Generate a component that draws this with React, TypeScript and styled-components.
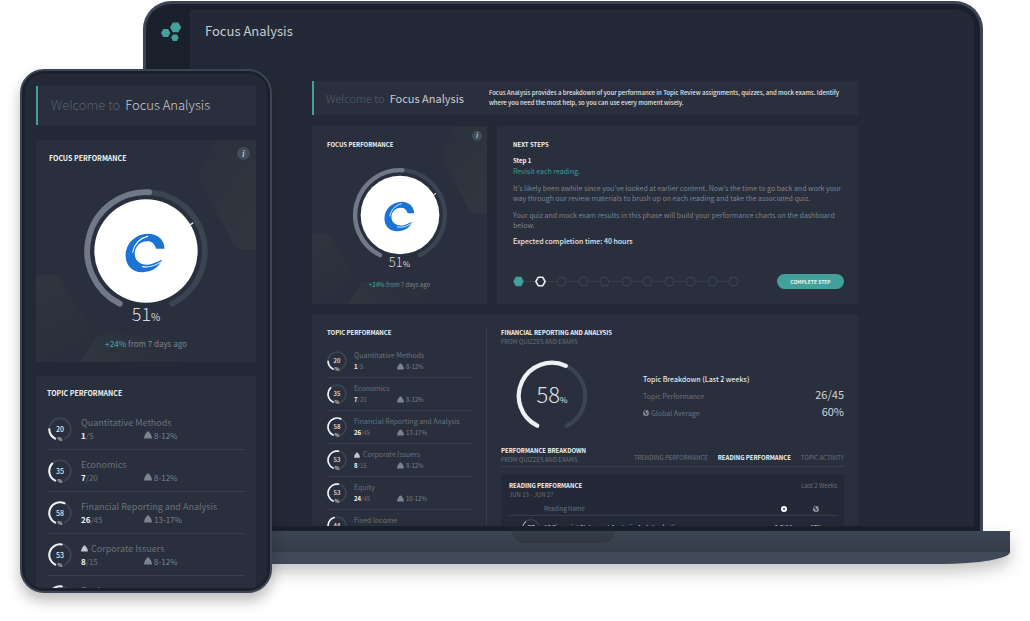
import React from "react";
import styled, { createGlobalStyle, css } from "styled-components";
import { FaEarthAmericas } from "react-icons/fa6";

const color = {
  screen: "#232936",
  bezel: "#1b212c",
  frame: "#3b4553",
  card: "#292f3c",
  line: "#383f4c",
  track: "#3b4451",
  teal: "#43a19b",
  tealText: "#3f9d96",
  white: "#f2f4f6",
  light: "#c9ccd1",
  muted: "#69727e",
  grey: "#7c848f",
};

const GlobalStyle = createGlobalStyle`
  * { box-sizing: border-box; }
  body {
    margin: 0;
    background: #fff;
    font-family: "Noto Sans CJK KR", "Noto Sans", sans-serif;
    color: ${color.light};
  }
  h1, h2, h3, p, ul, ol { margin: 0; padding: 0; font-size: inherit; font-weight: inherit; }
  ul, ol { list-style: none; }
  button { border: 0; padding: 0; background: none; font: inherit; color: inherit; cursor: pointer; }
  svg { display: block; }
`;

/* ---------- device frames ---------- */

const Stage = styled.main`
  position: relative;
  padding: 1px 20px 56px 116px;
`;

const Laptop = styled.section`
  display: flex;
  flex-direction: column;
`;

const Lid = styled.div`
  margin: 0 27px;
  height: 530px;
  padding: 6px 6px 5px;
  border: 3px solid ${color.frame};
  border-bottom: 0;
  border-radius: 28px 28px 0 0;
  background: ${color.bezel};
`;

const LaptopScreen = styled.div`
  display: flex;
  height: 100%;
  overflow: hidden;
  border-radius: 16px 16px 0 0;
  background: ${color.screen};
`;

const Base = styled.div`
  display: flex;
  flex-direction: column;
  filter: drop-shadow(0 8px 8px rgba(20, 20, 20, 0.25));
`;

const BaseTop = styled.div`
  display: flex;
  justify-content: center;
  height: 21px;
  background: linear-gradient(#3c4653, #343c48);
`;

const Notch = styled.div`
  width: 103px;
  height: 12px;
  border-radius: 0 0 12px 12px;
  background: linear-gradient(#363e4a, #303743);
`;

const BaseBottom = styled.div`
  height: 12px;
  border-radius: 0 0 70px 70px / 0 0 12px 12px;
  background: #3f4958;
`;

const Phone = styled.section`
  position: absolute;
  left: 20px;
  top: 69px;
  width: 252px;
  height: 524px;
  padding: 3px;
  border: 2px solid ${color.frame};
  border-radius: 24px;
  background: ${color.bezel};
  box-shadow: 0 8px 14px rgba(20, 20, 20, 0.28);
`;

const PhoneScreen = styled.div`
  display: flex;
  flex-direction: column;
  height: 100%;
  padding: 12px 11px 0;
  overflow: hidden;
  border-radius: 18px;
  background: ${color.screen};
`;

/* ---------- laptop page ---------- */

const Sidebar = styled.nav`
  flex: 0 0 38px;
  padding: 12px 0 0 8px;
  background: ${color.bezel};
`;

const HomeLink = styled.a`
  display: block;
  width: 22px;
`;

const Page = styled.div`
  flex: 1;
  min-width: 0;
`;

const PageHeader = styled.header`
  height: 44px;
  padding-left: 15px;
  line-height: 42px;
  font-size: 13px;
`;

const Content = styled.div`
  display: flex;
  flex-direction: column;
  gap: 11px;
  padding: 27px 116px 0 122px;
`;

const CardRow = styled.div`
  display: grid;
  grid-template-columns: 175px 1fr;
  gap: 10px;
  height: 178px;
`;

type Sized = { $large?: boolean };

const Banner = styled.header<Sized>`
  display: flex;
  align-items: center;
  flex-shrink: 0;
  height: ${(p) => (p.$large ? 39 : 34)}px;
  padding-left: ${(p) => (p.$large ? 13 : 12)}px;
  padding-right: 16px;
  border-left: 2px solid ${color.teal};
  background: ${color.card};
`;

const Welcome = styled.h1<Sized>`
  display: flex;
  gap: 5px;
  white-space: nowrap;
  font-size: ${(p) => (p.$large ? 13 : 11)}px;
  font-weight: ${(p) => (p.$large ? 300 : 400)};
  line-height: 16px;
  padding-bottom: 1px;
`;

const WelcomeLead = styled.span`
  color: #56606c;
  font-weight: 300;
`;

const BannerText = styled.p`
  margin-left: 25px;
  font-size: 6px;
  line-height: 10px;
  font-weight: 500;
  color: #e3e5e8;
`;

const Card = styled.section`
  position: relative;
  background: ${color.card};
`;

const CardTitle = styled.h2<Sized>`
  font-size: ${(p) => (p.$large ? 7 : 6)}px;
  line-height: ${(p) => (p.$large ? 12 : 10)}px;
  font-weight: 700;
  text-transform: uppercase;
  color: ${color.white};
`;

const Subtitle = styled.p`
  font-size: 6px;
  line-height: 8px;
  text-transform: uppercase;
  color: ${color.muted};
`;

/* ---------- focus performance ---------- */

const FocusCard = styled(Card)<Sized>`
  display: flex;
  flex-direction: column;
  flex-shrink: 0;
  overflow: hidden;
  ${(p) =>
    p.$large
      ? css`
          height: 222px;
          padding: 12px 13px;
          margin-top: 15px;
        `
      : css`
          padding: 14px 15px;
        `}
`;

const Pattern = styled.svg`
  position: absolute;
  inset: 0;
  width: 100%;
  height: 100%;
`;

const Layer = styled.div`
  position: relative;
`;

const InfoButton = styled.button<Sized>`
  position: absolute;
  top: ${(p) => (p.$large ? 7 : 5)}px;
  right: ${(p) => (p.$large ? 6 : 5)}px;
  width: ${(p) => (p.$large ? 13 : 10)}px;
  height: ${(p) => (p.$large ? 13 : 10)}px;
  border-radius: 50%;
  background: #434c59;
  color: #b4b9c0;
  font: italic 700 ${(p) => (p.$large ? 10 : 8)}px/1 "Liberation Serif", serif;
  text-align: center;
`;

const GaugeBox = styled(Layer)<Sized>`
  align-self: center;
  width: ${(p) => (p.$large ? 126 : 96)}px;
  margin-top: ${(p) => (p.$large ? 24 : 17)}px;
`;

const FocusValue = styled(Layer)<Sized>`
  margin-top: ${(p) => (p.$large ? -11 : -9)}px;
  text-align: center;
  font-weight: 300;
  font-size: ${(p) => (p.$large ? 18 : 13)}px;
  line-height: ${(p) => (p.$large ? 20 : 16)}px;
  color: #d9dcdf;
`;

const Unit = styled.small<{ $size: number }>`
  font-size: ${(p) => p.$size}px;
  font-weight: 400;
`;

const Delta = styled(Layer)<Sized>`
  margin-top: ${(p) => (p.$large ? 11 : 8)}px;
  text-align: center;
  font-size: ${(p) => (p.$large ? 8 : 6)}px;
  line-height: ${(p) => (p.$large ? 12 : 9)}px;
  color: ${color.grey};
`;

const Gain = styled.span`
  color: ${color.tealText};
  font-weight: 500;
`;

/* ---------- next steps ---------- */

const StepsCard = styled(Card)`
  display: flex;
  flex-direction: column;
  padding: 14px 14px 15px 16px;
  font-size: 7px;
  line-height: 10px;
`;

const StepName = styled.h3`
  margin-top: 6px;
  font-size: 6px;
  font-weight: 700;
  color: ${color.white};
`;

const StepLink = styled.a`
  color: ${color.tealText};
  text-decoration: none;
`;

const StepText = styled.p`
  margin-top: 7px;
  color: ${color.grey};
`;

const StepTime = styled.p`
  margin-top: 6px;
  font-weight: 500;
  color: #e3e5e8;
`;

const StepFooter = styled.div`
  display: flex;
  align-items: center;
  justify-content: space-between;
  margin-top: auto;
`;

const StepTrack = styled.ol`
  display: flex;
  width: 226px;
`;

const StepItem = styled.li`
  display: flex;
  align-items: center;
  &:not(:first-child) { flex: 1; }
  &:not(:first-child)::before {
    content: "";
    flex: 1;
    height: 1px;
    background: ${color.line};
  }
`;

const CompleteButton = styled.button`
  width: 67px;
  height: 15px;
  border-radius: 8px;
  background: ${color.teal};
  color: #eaf6f5;
  font-size: 5px;
  font-weight: 700;
  line-height: 15px;
`;

/* ---------- topics ---------- */

const TopicCard = styled(Card)`
  display: flex;
  padding-top: 13px;
  min-height: 260px;
`;

const PhoneTopicCard = styled(Card)`
  flex: 1;
  margin-top: 14px;
  padding: 11px 11px 0;
`;

const TopicColumn = styled.div`
  flex: 0 0 175px;
  padding: 0 14px 0 15px;
  border-right: 1px solid ${color.line};
`;

const TopicList = styled.ul<Sized>`
  margin-top: ${(p) => (p.$large ? 9 : 7)}px;
`;

const TopicItem = styled.li<Sized>`
  display: flex;
  align-items: center;
  gap: ${(p) => (p.$large ? 9 : 7)}px;
  height: ${(p) => (p.$large ? 42 : 33)}px;
  padding-left: ${(p) => (p.$large ? 1 : 0)}px;
  border-bottom: 1px solid ${color.line};
`;

const RingBox = styled.div<{ $size: number }>`
  display: grid;
  flex: 0 0 auto;
  width: ${(p) => p.$size}px;
  height: ${(p) => p.$size}px;
  place-items: center;
  > * { grid-area: 1 / 1; }
`;

const RingNumber = styled.span<Sized>`
  font-size: ${(p) => (p.$large ? 7 : 6)}px;
  line-height: 10px;
  font-weight: 500;
  color: #e6e8eb;
`;

const RingUnit = styled.span`
  align-self: end;
  font-size: 5px;
  line-height: 5px;
  font-weight: 700;
  color: ${color.light};
`;

const TopicBody = styled.div<Sized>`
  flex: 1;
  font-size: ${(p) => (p.$large ? 9 : 7)}px;
  line-height: ${(p) => (p.$large ? 13 : 11)}px;
  color: ${color.muted};
  white-space: nowrap;
`;

const TopicName = styled.h3`
  display: flex;
  align-items: center;
  gap: 3px;
`;

const TopicMeta = styled.div<Sized>`
  display: grid;
  grid-template-columns: ${(p) => (p.$large ? 63 : 43)}px 1fr;
  font-size: ${(p) => (p.$large ? 8 : 6)}px;
  color: ${color.grey};
`;

const Score = styled.span`
  color: ${color.muted};
  b { color: ${color.white}; font-weight: 700; }
`;

const Weight = styled.span`
  display: flex;
  align-items: center;
  gap: 2px;
`;

/* ---------- topic detail ---------- */

const Detail = styled.div`
  flex: 1;
  padding: 0 14px;
`;

const DetailRow = styled.div`
  display: flex;
  align-items: center;
  justify-content: space-between;
  margin-top: 14px;
  padding-left: 15px;
`;

const DetailNumber = styled.p`
  font-size: 22px;
  line-height: 30px;
  font-weight: 300;
  color: #dfe2e5;
`;

const Stats = styled.div`
  width: 201px;
  line-height: 17px;
  font-size: 7px;
`;

const StatsTitle = styled.h3`
  font-weight: 500;
  color: #e3e5e8;
`;

const StatLine = styled.div`
  display: flex;
  align-items: center;
  justify-content: space-between;
  height: 17px;
`;

const StatLabel = styled.span`
  display: flex;
  align-items: center;
  gap: 2px;
  color: ${color.muted};
`;

const StatValue = styled.span`
  padding-bottom: 3px;
  font-size: 11px;
  color: #d3d6da;
`;

const BreakdownHead = styled.div`
  display: flex;
  align-items: flex-end;
  justify-content: space-between;
  height: 21px;
  margin-top: 14px;
  border-bottom: 1px solid ${color.line};
`;

const HeadText = styled.div`
  padding-bottom: 2px;
`;

const Tabs = styled.div`
  display: flex;
  gap: 10px;
  padding-bottom: 3px;
`;

const Tab = styled.button<{ $active?: boolean }>`
  font-size: 6px;
  line-height: 10px;
  text-transform: uppercase;
  font-weight: ${(p) => (p.$active ? 700 : 400)};
  color: ${(p) => (p.$active ? color.white : color.muted)};
`;

const ReadingPanel = styled.div`
  margin-top: 7px;
  padding: 7px 7px 0 8px;
  background: ${color.screen};
`;

const ReadingHead = styled.div`
  display: flex;
  justify-content: space-between;
  font-size: 6px;
  line-height: 10px;
  color: ${color.muted};
`;

const ReadingTable = styled.table`
  width: 100%;
  margin-top: 5px;
  table-layout: fixed;
  border-collapse: collapse;
  font-size: 6px;
  line-height: 10px;
  th { height: 11px; padding: 0; font-weight: 400; text-align: left; color: ${color.muted}; border-bottom: 1px solid ${color.line}; }
  td { height: 26px; padding: 0; color: ${color.light}; font-weight: 500; white-space: nowrap; }
`;

const ColRing = styled.col`width: 35px;`;
const ColValue = styled.col`width: 33px;`;
const ColLast = styled.col`width: 37px;`;

const Centered = styled.div`
  display: flex;
  justify-content: center;
`;

const RingCell = styled(Centered)`
  padding-left: 9px;
`;

const LastCell = styled(Centered)`
  padding-right: 5px;
`;

/* ---------- drawings ---------- */

const GAP = 26.5;

function arc(r: number, from: number, to: number) {
  const at = (deg: number) => {
    const a = ((deg - 90) * Math.PI) / 180;
    return `${(50 + r * Math.cos(a)).toFixed(2)} ${(50 + r * Math.sin(a)).toFixed(2)}`;
  };
  return `M${at(from)} A${r} ${r} 0 ${to - from > 180 ? 1 : 0} 1 ${at(to)}`;
}

function Ring(props: { value: number; size: number; stroke: number; bar?: string; logo?: boolean }) {
  const { value, size, stroke, bar = "#eef1f4", logo } = props;
  const r = 49 - stroke / 2;
  const start = -180 + GAP;
  const end = 180 - GAP;
  const now = start + ((end - start) * value) / 100;
  return (
    <svg width={size} height={size} viewBox="0 0 100 100" fill="none" strokeLinecap="round" aria-hidden="true">
      <path d={arc(r, start, end)} stroke={color.track} strokeWidth={stroke} />
      <path d={arc(r, start, now)} stroke={bar} strokeWidth={stroke} />
      {logo && (
        <>
          <circle cx="50" cy="50" r="41" fill="#fff" />
          <path d="M85 29.2 L87 27.8" stroke="#dfe2e5" strokeWidth="1.2" />
          <g transform="translate(33.5 36) scale(0.79)">
            <path
              d="M39.5 15.5C39.5 7 33 .4 23 .4 10 .6.4 10.5.4 22.2.4 32.5 7.5 39.4 17.5 39 27 38.6 33.5 34.5 37.2 26.8 33 27.2 28.5 31.4 22 31.6 14.5 31.6 9.6 27 9.6 20.5 9.6 13.5 15 8 22 8 27 8 29.5 10.5 31 15.5Z"
              fill="#1b74d4"
            />
            <path d="M7.5 19C9 11 14.5 5 22.5 3" stroke="#fff" strokeWidth="1.1" />
            <path d="M17.5 33.4C25 34.8 31 32 36.5 28.4" stroke="#fff" strokeWidth="1.1" />
          </g>
        </>
      )}
    </svg>
  );
}

function HexPattern() {
  return (
    <Pattern viewBox="0 0 175 178" preserveAspectRatio="none" aria-hidden="true">
      <defs>
        <linearGradient id="hexA" x1="0" y1="0" x2="0.6" y2="1">
          <stop offset="0" stopColor="#30363f" stopOpacity="0.3" />
          <stop offset="1" stopColor="#30363f" />
        </linearGradient>
        <linearGradient id="hexB" x1="0" y1="0" x2="0.3" y2="1">
          <stop offset="0" stopColor="#30363f" />
          <stop offset="1" stopColor="#30363f" stopOpacity="0" />
        </linearGradient>
        <linearGradient id="hexC" x1="0" y1="0.6" x2="1" y2="0.4">
          <stop offset="0" stopColor="#30363f" />
          <stop offset="1" stopColor="#30363f" stopOpacity="0" />
        </linearGradient>
      </defs>
      <path d="M145 0 L130 24 Q128 29 130 33 L157 83 Q160 88 166 88 L175 88 V0Z" fill="url(#hexA)" />
      <path d="M0 108 H14 Q18 108 20 112 L40 146 Q41 150 39 153 L26 178 H0Z" fill="url(#hexB)" />
      <path d="M36 178 L47 160 Q49 156 53 156 H98 Q102 156 104 160 L114 178Z" fill="url(#hexC)" />
    </Pattern>
  );
}

function LogoMark() {
  const hex = (cx: number, cy: number, r: number) => {
    const h = r * 0.866;
    const d = r / 2;
    return `M${cx - r} ${cy}L${cx - d} ${cy - h}H${cx + d}L${cx + r} ${cy}L${cx + d} ${cy + h}H${cx - d}Z`;
  };
  return (
    <svg width="22" height="22" viewBox="0 0 22 22" fill={color.teal} stroke={color.teal} strokeWidth="1.4" strokeLinejoin="round" aria-hidden="true">
      <path d={hex(15.6, 5.3, 4.8)} />
      <path d={hex(5.7, 11, 3.9)} />
      <path d={hex(14.9, 15.7, 3)} />
    </svg>
  );
}

function StepHex({ state }: { state: "done" | "current" | "todo" }) {
  const stroke = state === "done" ? color.teal : state === "current" ? "#e9ebed" : "#3b4350";
  return (
    <svg width="11" height="11" viewBox="0 0 11 11" fill={state === "done" ? color.teal : "none"} stroke={stroke} strokeWidth={state === "current" ? 1.6 : 1.2} strokeLinejoin="round" aria-hidden="true">
      <path d="M.9 5.5L3.2 1.3H7.8L10.1 5.5L7.8 9.7H3.2Z" />
    </svg>
  );
}

function WeightIcon({ size, fill = color.grey }: { size: number; fill?: string }) {
  return (
    <svg width={size} height={size} viewBox="0 0 16 16" fill={fill} aria-hidden="true">
      <path d="M8 1a3.4 3.4 0 0 0-3.300 4H3.800a1.600 1.600 0 0 0-1.500 1.100L.2 13A1.500 1.500 0 0 0 1.700 15h12.600A1.500 1.500 0 0 0 15.800 13L13.700 6.100A1.600 1.600 0 0 0 12.200 5h-.9A3.400 3.400 0 0 0 8 1z" />
    </svg>
  );
}

/* ---------- composed parts ---------- */

const topics = [
  { name: "Quantitative Methods", value: 20, got: 1, of: 5, weight: "8-12%" },
  { name: "Economics", value: 35, got: 7, of: 20, weight: "8-12%" },
  { name: "Financial Reporting and Analysis", value: 58, got: 26, of: 45, weight: "13-17%" },
  { name: "Corporate Issuers", value: 53, got: 8, of: 15, weight: "8-12%", flagged: true },
  { name: "Equity", value: 53, got: 24, of: 45, weight: "10-12%" },
  { name: "Fixed Income", value: 44, got: 11, of: 25, weight: "10-12%" },
];

function FocusPerformance({ large }: { large?: boolean }) {
  return (
    <FocusCard $large={large}>
      <HexPattern />
      <Layer>
        <CardTitle $large={large}>Focus Performance</CardTitle>
      </Layer>
      <InfoButton $large={large} type="button" aria-label="About focus performance">i</InfoButton>
      <GaugeBox $large={large}>
        <Ring value={51} size={large ? 126 : 96} stroke={4.6} bar="#717887" logo />
      </GaugeBox>
      <FocusValue $large={large}>
        51<Unit $size={large ? 10 : 8}>%</Unit>
      </FocusValue>
      <Delta $large={large}>
        <Gain>+24%</Gain> from 7 days ago
      </Delta>
    </FocusCard>
  );
}

function Topics({ large, items }: { large?: boolean; items: typeof topics }) {
  const ring = large ? 24 : 20;
  return (
    <>
      <CardTitle $large={large}>Topic Performance</CardTitle>
      <TopicList $large={large}>
        {items.map((t) => (
          <TopicItem key={t.name} $large={large}>
            <RingBox $size={ring}>
              <Ring value={t.value} size={ring} stroke={8.5} />
              <RingNumber $large={large}>{t.value}</RingNumber>
              <RingUnit>%</RingUnit>
            </RingBox>
            <TopicBody $large={large}>
              <TopicName>
                {t.flagged && <WeightIcon size={large ? 7 : 6} fill="#c3c7cc" />}
                {t.name}
              </TopicName>
              <TopicMeta $large={large}>
                <Score><b>{t.got}</b>/{t.of}</Score>
                <Weight><WeightIcon size={large ? 8 : 7} />{t.weight}</Weight>
              </TopicMeta>
            </TopicBody>
          </TopicItem>
        ))}
      </TopicList>
    </>
  );
}

function TopicDetail() {
  return (
    <Detail>
      <CardTitle>Financial Reporting and Analysis</CardTitle>
      <Subtitle>From quizzes and exams</Subtitle>
      <DetailRow>
        <RingBox $size={72}>
          <Ring value={58} size={72} stroke={5.8} />
          <DetailNumber>58<Unit $size={8}>%</Unit></DetailNumber>
        </RingBox>
        <Stats>
          <StatsTitle>Topic Breakdown (Last 2 weeks)</StatsTitle>
          <StatLine>
            <StatLabel>Topic Performance</StatLabel>
            <StatValue>26/45</StatValue>
          </StatLine>
          <StatLine>
            <StatLabel><FaEarthAmericas size={6} color="#8a919b" />Global Average</StatLabel>
            <StatValue>60%</StatValue>
          </StatLine>
        </Stats>
      </DetailRow>
      <BreakdownHead>
        <HeadText>
          <CardTitle>Performance Breakdown</CardTitle>
          <Subtitle>From quizzes and exams</Subtitle>
        </HeadText>
        <Tabs role="tablist">
          <Tab type="button" role="tab">Trending Performance</Tab>
          <Tab type="button" role="tab" aria-selected="true" $active>Reading Performance</Tab>
          <Tab type="button" role="tab">Topic Activity</Tab>
        </Tabs>
      </BreakdownHead>
      <ReadingPanel>
        <ReadingHead>
          <div>
            <CardTitle>Reading Performance</CardTitle>
            <Subtitle>Jun 13 - Jun 27</Subtitle>
          </div>
          <span>Last 2 Weeks</span>
        </ReadingHead>
        <ReadingTable>
          <colgroup>
            <ColRing />
            <col />
            <ColValue />
            <ColLast />
          </colgroup>
          <thead>
            <tr>
              <th aria-label="Score" />
              <th>Reading Name</th>
              <th aria-label="You">
                <Centered>
                  <svg width="6" height="6" viewBox="0 0 6 6" aria-hidden="true">
                    <circle cx="3" cy="3" r="2.1" fill="#5b6470" stroke="#fff" strokeWidth="1.8" />
                  </svg>
                </Centered>
              </th>
              <th aria-label="Global">
                <LastCell><FaEarthAmericas size={6} color="#9aa0a9" /></LastCell>
              </th>
            </tr>
          </thead>
          <tbody>
            <tr>
              <td>
                <RingCell>
                  <RingBox $size={18}>
                    <Ring value={37} size={18} stroke={6} bar="#a9aeb6" />
                    <RingNumber>37</RingNumber>
                  </RingBox>
                </RingCell>
              </td>
              <td>18 Financial Statement Analysis: An Introduction</td>
              <td><Centered>3.7/10</Centered></td>
              <td><LastCell>47%</LastCell></td>
            </tr>
          </tbody>
        </ReadingTable>
      </ReadingPanel>
    </Detail>
  );
}

function NextSteps() {
  const states = Array.from({ length: 11 }, (_, i) => (i === 0 ? "done" : i === 1 ? "current" : "todo")) as Array<
    "done" | "current" | "todo"
  >;
  return (
    <StepsCard>
      <CardTitle>Next Steps</CardTitle>
      <StepName>Step 1</StepName>
      <div><StepLink href="#readings">Revisit each reading.</StepLink></div>
      <StepText>
        It’s likely been awhile since you’ve looked at earlier content. Now’s the time to go back and work your
        way through our review materials to brush up on each reading and take the associated quiz.
      </StepText>
      <StepText>
        Your quiz and mock exam results in this phase will build your performance charts on the dashboard below.
      </StepText>
      <StepTime>Expected completion time: 40 hours</StepTime>
      <StepFooter>
        <StepTrack>
          {states.map((s, i) => (
            <StepItem key={i}><StepHex state={s} /></StepItem>
          ))}
        </StepTrack>
        <CompleteButton type="button">COMPLETE STEP</CompleteButton>
      </StepFooter>
    </StepsCard>
  );
}

export default function App() {
  return (
    <Stage>
      <GlobalStyle />
      <Laptop>
        <Lid>
          <LaptopScreen>
            <Sidebar>
              <HomeLink href="#home" aria-label="Home"><LogoMark /></HomeLink>
            </Sidebar>
            <Page>
              <PageHeader>Focus Analysis</PageHeader>
              <Content>
                <Banner>
                  <Welcome><WelcomeLead>Welcome to</WelcomeLead> Focus Analysis</Welcome>
                  <BannerText>
                    Focus Analysis provides a breakdown of your performance in Topic Review assignments, quizzes, and
                    mock exams. Identify where you need the most help, so you can use every moment wisely.
                  </BannerText>
                </Banner>
                <CardRow>
                  <FocusPerformance />
                  <NextSteps />
                </CardRow>
                <TopicCard>
                  <TopicColumn><Topics items={topics} /></TopicColumn>
                  <TopicDetail />
                </TopicCard>
              </Content>
            </Page>
          </LaptopScreen>
        </Lid>
        <Base>
          <BaseTop><Notch /></BaseTop>
          <BaseBottom />
        </Base>
      </Laptop>
      <Phone>
        <PhoneScreen>
          <Banner $large>
            <Welcome $large><WelcomeLead>Welcome to</WelcomeLead> Focus Analysis</Welcome>
          </Banner>
          <FocusPerformance large />
          <PhoneTopicCard><Topics large items={topics.slice(0, 5)} /></PhoneTopicCard>
        </PhoneScreen>
      </Phone>
    </Stage>
  );
}
